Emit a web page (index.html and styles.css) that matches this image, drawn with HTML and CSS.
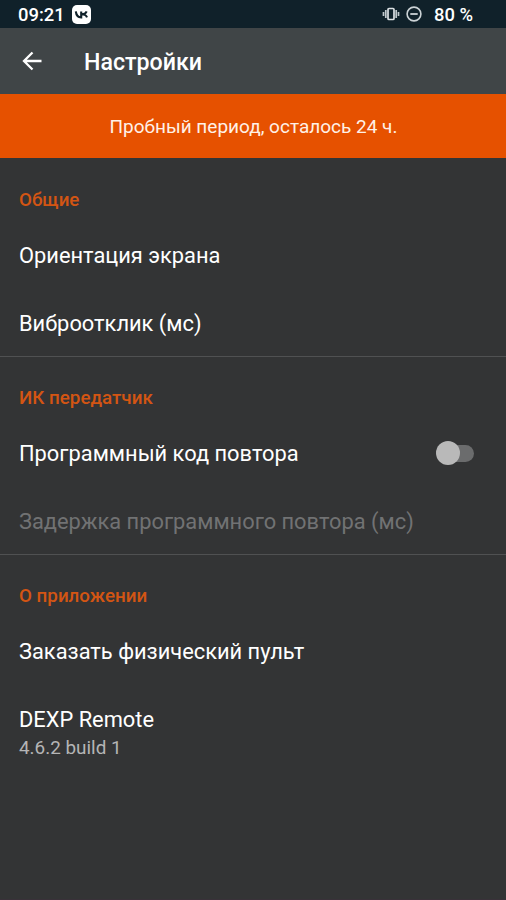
FILE: index.html
```html
<!DOCTYPE html>
<html lang="ru">
<head>
<meta charset="utf-8">
<title>Настройки</title>
<link rel="stylesheet" href="styles.css">
</head>
<body>
<div class="statusbar">
  <span class="clock">09:21</span>
  <svg class="vk" viewBox="0 0 19 19"><rect width="19" height="19" rx="5" fill="#fff"/><path d="M3.800 6.400c.4 3.700 2.300 6 5.400 6V6.400M14.600 6.400c-.6 1.700-2.300 2.900-5.200 2.900 2.900 0 4.900 1.100 5.600 3.100" fill="none" stroke="#10212a" stroke-width="2.100"/></svg>
  <span class="spacer"></span>
  <svg class="vibrate" viewBox="0 0 18 14"><rect x="6" y="1.500" width="6" height="11" rx="1" fill="none" stroke="#dce1e4" stroke-width="1.700"/><path d="M3.800 3v8M14.200 3v8M1.500 5v4M16.500 5v4" stroke="#c0c8cc" stroke-width="1.700"/></svg>
  <svg class="dnd" viewBox="0 0 16 16"><circle cx="8" cy="8" r="6.900" fill="none" stroke="#ccd3d6" stroke-width="1.600"/><path d="M4.300 8h7.400" stroke="#ccd3d6" stroke-width="1.800"/></svg>
  <span class="battery">80 %</span>
</div>
<header class="toolbar">
  <svg class="back" viewBox="0 0 20 20"><path d="M19.500 10H2M10.500 1.500 2 10l8.500 8.500" fill="none" stroke="#fff" stroke-width="2.300"/></svg>
  <h1 class="title">Настройки</h1>
</header>
<div class="banner"><span>Пробный период, осталось 24 ч.</span></div>
<main>
  <section class="group">
    <h2 class="heading">Общие</h2>
    <div class="row"><span class="label">Ориентация экрана</span></div>
    <div class="row"><span class="label">Виброотклик (мс)</span></div>
  </section>
  <section class="group">
    <h2 class="heading">ИК передатчик</h2>
    <div class="row"><span class="label">Программный код повтора</span><span class="switch"></span></div>
    <div class="row disabled"><span class="label">Задержка программного повтора (мс)</span></div>
  </section>
  <section class="group last">
    <h2 class="heading">О приложении</h2>
    <div class="row"><span class="label">Заказать физический пульт</span></div>
    <div class="row version"><span class="label">DEXP Remote</span><span class="summary">4.6.2 build 1</span></div>
  </section>
</main>
<div class="edge"></div>
</body>
</html>
```
FILE: styles.css
```css
* { box-sizing: border-box; }
body {
  margin: 0;
  height: 900px;
  display: flex;
  flex-direction: column;
  overflow: hidden;
  background: #333435;
  color: #fff;
  font-family: Roboto, sans-serif;
}
.statusbar {
  height: 28px;
  flex: none;
  display: flex;
  align-items: center;
  padding: 0 33px 0 18px;
  background: #10212a;
  font-size: 18.400px;
  font-weight: 500;
}
.clock { padding-top: 1px; }
.battery { padding-top: 1px; }
.vk { width: 19px; height: 19px; margin-left: 7px; }
.spacer { flex: 1; }
.vibrate { width: 18px; height: 14px; }
.dnd { width: 16px; height: 16px; margin: 0 12px 0 6px; }
.toolbar {
  height: 65.500px;
  flex: none;
  display: flex;
  align-items: center;
  padding: 0 22px;
  background: #404547;
}
.back { width: 20px; height: 20px; }
.title { margin: 2px 0 0 42px; font-size: 23.200px; font-weight: 500; }
.banner {
  height: 64.500px;
  flex: none;
  display: flex;
  align-items: center;
  justify-content: center;
  padding: 1px 0 0 1px;
  background: #e65100;
  color: #fff1e8;
  font-size: 19px;
}
main { flex: 1; }
.group { height: 198.500px; border-bottom: 1px solid #505152; }
.group + .group { height: 198px; }
.group.last { border-bottom: 0; }
.heading {
  height: 63px;
  margin: 0;
  padding: 30px 19px 0;
  color: #d35513;
  font-size: 18.800px;
  line-height: 24px;
  font-weight: 500;
}
.group + .group .heading { height: 62.500px; padding-top: 29px; }
.row {
  height: 67.500px;
  display: flex;
  align-items: center;
  justify-content: space-between;
  padding: 3px 32px 0 19px;
}
.label { font-size: 21.850px; line-height: 28px; white-space: nowrap; }
.disabled { color: #717273; }
.switch {
  width: 38px;
  height: 24px;
  margin-bottom: 3px;
  position: relative;
}
.switch::before {
  content: "";
  position: absolute;
  inset: 4px 0 3px 9px;
  border-radius: 9px;
  background: #6b6c6d;
}
.switch::after {
  content: "";
  position: absolute;
  inset: 0 14px 0 0;
  border-radius: 50%;
  background: #b9b9b9;
}
.version { height: 94px; flex-direction: column; align-items: flex-start; justify-content: center; }
.summary { color: #b5b5b6; font-size: 18.900px; line-height: 27px; }
.edge { height: 1px; flex: none; background: #393139; }
```
